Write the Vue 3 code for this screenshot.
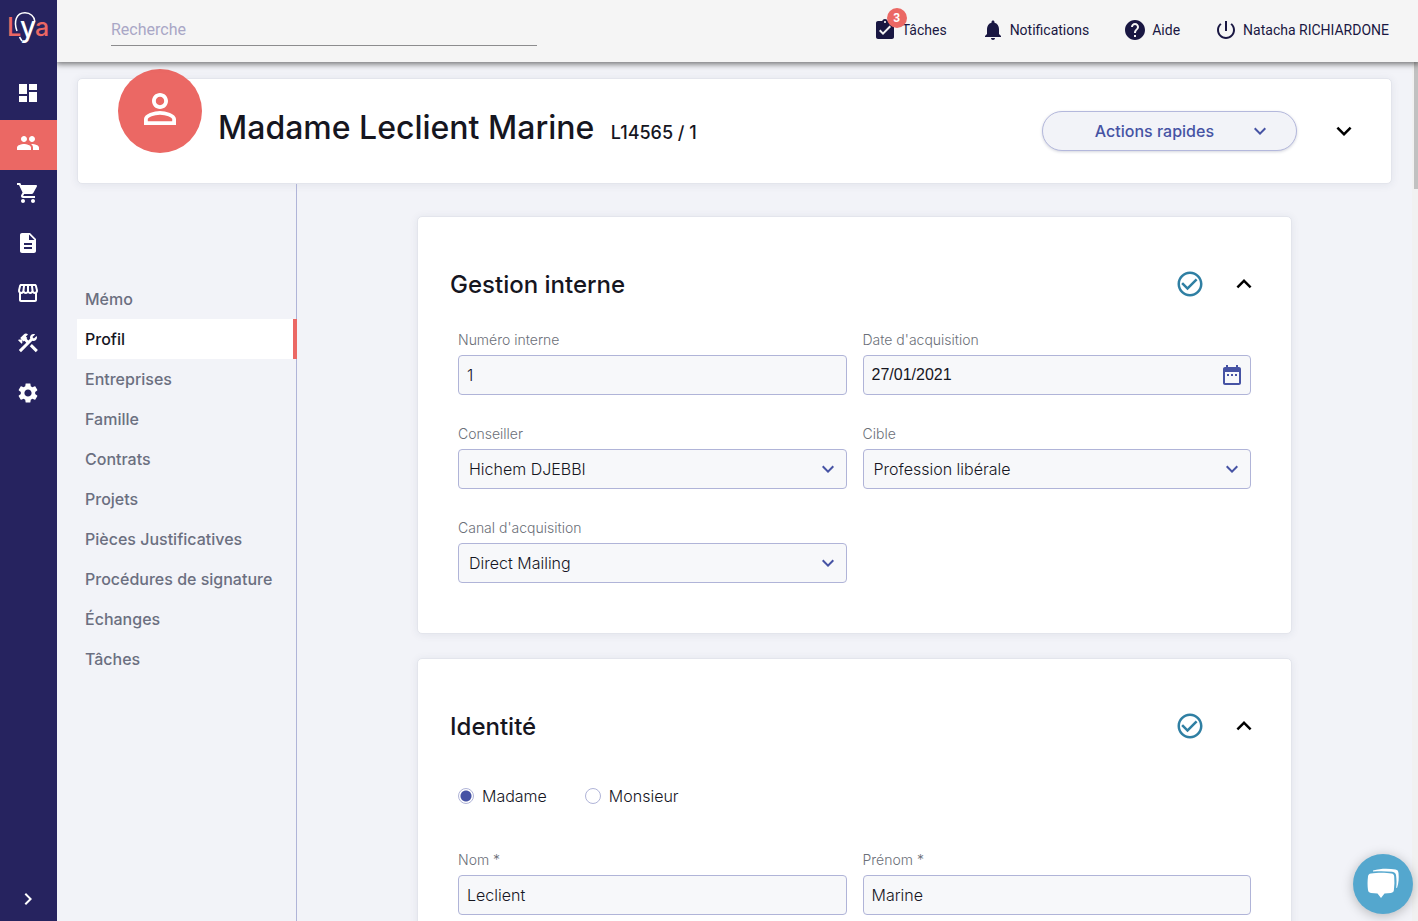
<script setup>
import { ref } from 'vue'

const icons = {
  dashboard: 'M3 13h8V3H3v10zm0 8h8v-6H3v6zm10 0h8V11h-8v10zm0-18v6h8V3h-8z',
  people: 'M16 11c1.66 0 2.99-1.34 2.99-3S17.66 5 16 5c-1.66 0-3 1.34-3 3s1.34 3 3 3zm-8 0c1.66 0 2.99-1.34 2.99-3S9.66 5 8 5C6.34 5 5 6.34 5 8s1.34 3 3 3zm0 2c-2.33 0-7 1.17-7 3.5V19h14v-2.5c0-2.33-4.67-3.5-7-3.5zm8 0c-.29 0-.62.02-.97.05 1.16.84 1.97 1.97 1.97 3.45V19h6v-2.5c0-2.33-4.67-3.5-7-3.5z',
  cart: 'M7 18c-1.1 0-1.99.9-1.99 2S5.9 22 7 22s2-.9 2-2-.9-2-2-2zM1 2v2h2l3.6 7.59-1.35 2.45c-.16.28-.25.61-.25.96 0 1.1.9 2 2 2h12v-2H7.42c-.14 0-.25-.11-.25-.25l.03-.12.9-1.63h7.45c.75 0 1.41-.41 1.75-1.03l3.58-6.49c.08-.14.12-.31.12-.48 0-.55-.45-1-1-1H5.21l-.94-2H1zm16 16c-1.1 0-1.99.9-1.99 2s.89 2 1.99 2 2-.9 2-2-.9-2-2-2z',
  document: 'M14 2H6c-1.1 0-1.99.9-1.99 2L4 20c0 1.1.89 2 1.99 2H18c1.1 0 2-.9 2-2V8l-6-6zm2 16H8v-2h8v2zm0-4H8v-2h8v2zm-3-5V3.5L18.5 9H13z',
  store: 'M21.9 8.89l-1.05-4.37c-.22-.9-1-1.52-1.91-1.52H5.05c-.9 0-1.69.63-1.9 1.52L2.1 8.89c-.24 1.02-.02 2.06.62 2.88.08.11.19.19.28.29V19c0 1.1.9 2 2 2h14c1.1 0 2-.9 2-2v-6.94c.09-.09.2-.18.28-.28.64-.82.87-1.87.62-2.89zm-2.99-3.9l1.05 4.37c.1.42.01.84-.25 1.17-.14.18-.44.47-.94.47-.61 0-1.14-.49-1.21-1.14L16.98 5l1.93-.01zM13 5h1.96l.54 4.52c.05.39-.07.78-.33 1.07-.22.26-.54.41-.95.41-.67 0-1.22-.59-1.22-1.31V5zM8.49 9.52L9.04 5H11v4.69c0 .72-.55 1.31-1.29 1.31-.34 0-.65-.15-.89-.41-.25-.29-.37-.68-.33-1.07zm-4.45-.16L5.05 5h1.97l-.58 4.86c-.08.65-.6 1.14-1.21 1.14-.49 0-.8-.29-.93-.47-.27-.32-.36-.75-.26-1.17zM5 19v-6.03c.08.01.15.03.23.03.87 0 1.66-.36 2.24-.95.6.6 1.4.95 2.31.95.87 0 1.65-.36 2.23-.93.59.57 1.39.93 2.29.93.84 0 1.64-.35 2.24-.95.58.59 1.37.95 2.24.95.08 0 .15-.02.23-.03V19H5z',
  tools: 'M13.78 15.17l2.12-2.12 6 6-2.12 2.12zM17.5 10c1.93 0 3.5-1.57 3.5-3.5 0-.58-.16-1.12-.41-1.6l-2.7 2.7L16.4 6.11l2.7-2.7C18.62 3.16 18.08 3 17.5 3 15.57 3 14 4.57 14 6.5c0 .41.08.8.21 1.16l-1.85 1.85-1.78-1.78.71-.71-1.41-1.41L12 3.49c-1.17-1.17-3.07-1.17-4.24 0L4.22 7.03l1.41 1.41H2.81l-.71.71 3.54 3.54.71-.71V9.15l1.41 1.41.71-.71 1.78 1.78-7.41 7.41 2.12 2.12L16.34 9.79c.36.13.75.21 1.16.21z',
  settings: 'M19.14 12.94c.04-.3.06-.61.06-.94 0-.32-.02-.64-.07-.94l2.03-1.58c.18-.14.23-.41.12-.61l-1.92-3.32c-.12-.22-.37-.29-.59-.22l-2.39.96c-.5-.38-1.03-.7-1.62-.94l-.36-2.54c-.04-.24-.24-.41-.48-.41h-3.84c-.24 0-.43.17-.47.41l-.36 2.54c-.59.24-1.13.57-1.62.94l-2.39-.96c-.22-.08-.47 0-.59.22L2.74 8.87c-.12.21-.08.47.12.61l2.03 1.58c-.05.3-.09.63-.09.94s.02.64.07.94l-2.03 1.58c-.18.14-.23.41-.12.61l1.92 3.32c.12.22.37.29.59.22l2.39-.96c.5.38 1.03.7 1.62.94l.36 2.54c.05.24.24.41.48.41h3.84c.24 0 .44-.17.47-.41l.36-2.54c.59-.24 1.13-.56 1.62-.94l2.39.96c.22.08.47 0 .59-.22l1.92-3.32c.12-.22.07-.47-.12-.61l-2.01-1.58zM12 15.6c-1.98 0-3.6-1.62-3.6-3.6s1.62-3.6 3.6-3.6 3.6 1.62 3.6 3.6-1.62 3.6-3.6 3.6z',
  task: 'M19 3h-4.18C14.4 1.84 13.3 1 12 1c-1.3 0-2.4.84-2.82 2H5c-1.1 0-2 .9-2 2v14c0 1.1.9 2 2 2h14c1.1 0 2-.9 2-2V5c0-1.1-.9-2-2-2zm-7 0c.55 0 1 .45 1 1s-.45 1-1 1-1-.45-1-1 .45-1 1-1zm-2 14l-4-4 1.41-1.41L10 14.17l6.59-6.59L18 9l-8 8z',
  bell: 'M12 22c1.1 0 2-.9 2-2h-4c0 1.1.89 2 2 2zm6-6v-5c0-3.07-1.64-5.64-4.5-6.32V4c0-.83-.67-1.5-1.5-1.5s-1.5.67-1.5 1.5v.68C7.63 5.36 6 7.92 6 11v5l-2 2v1h16v-1l-2-2z',
  help: 'M12 2C6.48 2 2 6.48 2 12s4.48 10 10 10 10-4.48 10-10S17.52 2 12 2zm1 17h-2v-2h2v2zm2.07-7.75l-.9.92C13.45 12.9 13 13.5 13 15h-2v-.5c0-1.1.45-2.1 1.17-2.83l1.24-1.26c.37-.36.59-.86.59-1.41 0-1.1-.9-2-2-2s-2 .9-2 2H8c0-2.21 1.79-4 4-4s4 1.79 4 4c0 .88-.36 1.68-.93 2.25z',
  power: 'M13 3h-2v10h2V3zm4.83 2.17l-1.42 1.42C17.99 7.86 19 9.81 19 12c0 3.87-3.13 7-7 7s-7-3.13-7-7c0-2.19 1.01-4.14 2.58-5.42L6.17 5.17C4.23 6.82 3 9.26 3 12c0 4.97 4.03 9 9 9s9-4.03 9-9c0-2.74-1.23-5.18-3.17-6.83z',
  person: 'M12 5.9c1.16 0 2.1.94 2.1 2.1s-.94 2.1-2.1 2.1S9.9 9.16 9.9 8s.94-2.1 2.1-2.1m0 9c2.97 0 6.1 1.46 6.1 2.1v1.1H5.9V17c0-.64 3.13-2.1 6.1-2.1M12 4C9.79 4 8 5.79 8 8s1.79 4 4 4 4-1.79 4-4-1.79-4-4-4zm0 9c-2.67 0-8 1.34-8 4v3h16v-3c0-2.66-5.33-4-8-4z',
  down: 'M7.41 8.59L12 13.17l4.59-4.58L18 10l-6 6-6-6 1.41-1.41z',
  up: 'M7.41 15.41L12 10.83l4.59 4.58L18 14l-6-6-6 6 1.41 1.41z',
  right: 'M8.59 16.59L13.17 12 8.59 7.41 10 6l6 6-6 6-1.41-1.41z',
  check: 'M16.59 7.58L10 14.17l-3.59-3.58L5 12l5 5 8-8-1.41-1.42zM12 2C6.48 2 2 6.48 2 12s4.48 10 10 10 10-4.48 10-10S17.52 2 12 2zm0 18c-4.42 0-8-3.58-8-8s3.58-8 8-8 8 3.58 8 8-3.58 8-8 8z',
  calendar: 'M9 11H7v2h2v-2zm4 0h-2v2h2v-2zm4 0h-2v2h2v-2zm2-7h-1V2h-2v2H8V2H6v2H5c-1.11 0-1.99.9-1.99 2L3 20c0 1.1.89 2 2 2h14c1.1 0 2-.9 2-2V6c0-1.1-.9-2-2-2zm0 16H5V9h14v11z',
}

const modules = [
  { icon: 'dashboard', label: 'Tableau de bord' },
  { icon: 'people', label: 'Clients' },
  { icon: 'cart', label: 'Ventes' },
  { icon: 'document', label: 'Documents' },
  { icon: 'store', label: 'Boutique' },
  { icon: 'tools', label: 'Outils' },
  { icon: 'settings', label: 'Paramètres' },
]
const topLinks = [
  { icon: 'task', label: 'Tâches', badge: 3 },
  { icon: 'bell', label: 'Notifications' },
  { icon: 'help', label: 'Aide' },
  { icon: 'power', label: 'Natacha RICHIARDONE' },
]
const sections = ['Mémo', 'Profil', 'Entreprises', 'Famille', 'Contrats', 'Projets', 'Pièces Justificatives', 'Procédures de signature', 'Échanges', 'Tâches']

const number = ref('1')
const acquired = ref('27/01/2021')
const civility = ref('madame')
const lastName = ref('Leclient')
const firstName = ref('Marine')
</script>

<template>
  <div class="app">
    <aside class="rail">
      <a href="#" class="logo" aria-label="Lya">
        <svg viewBox="0 0 57 57" width="57" height="57">
          <path d="M17 31C13.500 22 16 12.800 25 12.800c5.500 0 9.300 3.700 9.700 8.200M19.500 37l2.500 4" fill="none" stroke="#fff" stroke-width="1.500" />
          <text x="7" y="36" class="logo-red">L</text>
          <text x="20" y="37" class="logo-white">y</text>
          <text x="35" y="36" class="logo-red">a</text>
        </svg>
      </a>
      <nav class="modules">
        <a v-for="m in modules" :key="m.icon" href="#" :aria-label="m.label" :class="['module', { active: m.icon === 'people' }]">
          <svg viewBox="0 0 24 24" width="24" height="24"><path :d="icons[m.icon]" /></svg>
        </a>
      </nav>
      <button class="expand" aria-label="Déplier le menu">
        <svg viewBox="0 0 24 24" width="24" height="24"><path :d="icons.right" /></svg>
      </button>
    </aside>

    <div class="page">
      <header class="topbar">
        <input class="search" type="search" placeholder="Recherche" aria-label="Recherche" />
        <nav class="toplinks">
          <a v-for="l in topLinks" :key="l.label" href="#" class="toplink">
            <svg viewBox="0 0 24 24" width="24" height="24"><path :d="icons[l.icon]" /></svg>
            <span v-if="l.badge" class="badge">{{ l.badge }}</span>
            <span>{{ l.label }}</span>
          </a>
        </nav>
      </header>

      <div class="scroller">
        <main class="content">
          <section class="card client">
            <div class="avatar">
              <svg viewBox="0 0 24 24" width="48" height="48"><path :d="icons.person" /></svg>
            </div>
            <h1>Madame Leclient Marine <small>L14565 / 1</small></h1>
            <button class="quick">
              <span>Actions rapides</span>
              <svg viewBox="0 0 24 24" width="24" height="24"><path :d="icons.down" /></svg>
            </button>
            <button class="icon-btn" aria-label="Afficher le détail">
              <svg viewBox="0 0 24 24" width="30" height="30"><path :d="icons.down" /></svg>
            </button>
          </section>

          <div class="columns">
            <nav class="sections">
              <a v-for="s in sections" :key="s" href="#" :class="{ active: s === 'Profil' }">{{ s }}</a>
            </nav>

            <div class="forms">
              <section class="card form-card">
                <div class="card-head">
                  <h2>Gestion interne</h2>
                  <svg class="valid" viewBox="0 0 24 24" width="30" height="30"><path :d="icons.check" /></svg>
                  <button class="icon-btn" aria-label="Replier">
                    <svg viewBox="0 0 24 24" width="30" height="30"><path :d="icons.up" /></svg>
                  </button>
                </div>
                <div class="fields">
                  <div class="field">
                    <label for="numero">Numéro interne</label>
                    <input id="numero" v-model="number" type="text" />
                  </div>
                  <div class="field">
                    <label for="date">Date d'acquisition</label>
                    <div class="control">
                      <input id="date" v-model="acquired" class="date" type="text" />
                      <svg viewBox="0 0 24 24" width="24" height="24"><path :d="icons.calendar" /></svg>
                    </div>
                  </div>
                  <div class="field">
                    <label for="conseiller">Conseiller</label>
                    <div class="control">
                      <select id="conseiller"><option>Hichem DJEBBI</option></select>
                      <svg viewBox="0 0 24 24" width="24" height="24"><path :d="icons.down" /></svg>
                    </div>
                  </div>
                  <div class="field">
                    <label for="cible">Cible</label>
                    <div class="control">
                      <select id="cible"><option>Profession libérale</option></select>
                      <svg viewBox="0 0 24 24" width="24" height="24"><path :d="icons.down" /></svg>
                    </div>
                  </div>
                  <div class="field">
                    <label for="canal">Canal d'acquisition</label>
                    <div class="control">
                      <select id="canal"><option>Direct Mailing</option></select>
                      <svg viewBox="0 0 24 24" width="24" height="24"><path :d="icons.down" /></svg>
                    </div>
                  </div>
                </div>
              </section>

              <section class="card form-card">
                <div class="card-head">
                  <h2>Identité</h2>
                  <svg class="valid" viewBox="0 0 24 24" width="30" height="30"><path :d="icons.check" /></svg>
                  <button class="icon-btn" aria-label="Replier">
                    <svg viewBox="0 0 24 24" width="30" height="30"><path :d="icons.up" /></svg>
                  </button>
                </div>
                <div class="radios">
                  <label><input v-model="civility" type="radio" name="civility" value="madame" />Madame</label>
                  <label><input v-model="civility" type="radio" name="civility" value="monsieur" />Monsieur</label>
                </div>
                <div class="fields">
                  <div class="field">
                    <label for="nom">Nom *</label>
                    <input id="nom" v-model="lastName" type="text" />
                  </div>
                  <div class="field">
                    <label for="prenom">Prénom *</label>
                    <input id="prenom" v-model="firstName" type="text" />
                  </div>
                </div>
              </section>
            </div>
          </div>
        </main>
        <div class="track"><div class="thumb"></div></div>
      </div>
    </div>

    <button class="chat" aria-label="Ouvrir la discussion">
      <svg viewBox="0 0 32 32" width="32" height="32">
        <path d="M6 2.500C14 .2 22 .5 28.500 1.500c2 .3 2.800 1.500 3 3.500.5 5 .3 10-1.500 15l-.8-.2c.5-4 .4-8-.1-12-.3-2.500-1.300-3.700-4-4C19 3 12 3 6 3.500z" />
        <path d="M4 5.500c6-.9 15-.9 20.500 0 1.800.3 2.500 1.200 2.700 3 .4 4.500.3 9-.3 13.500-.2 1.800-1 2.600-3 2.900-2 .3-4.200.4-6.400.5L14 30l-3.500-4.600c-2.200-.1-4.400-.2-6.500-.5-2-.3-2.700-1.100-3-2.900-.6-4.500-.6-9 0-13.500.3-1.800 1-2.700 3-3z" />
      </svg>
    </button>
  </div>
</template>

<style>
body { margin: 0; }
</style>

<style scoped>
* { box-sizing: border-box; }
.app {
  display: flex;
  height: 100vh;
  overflow: hidden;
  background: #f2f3f8;
  color: #16161f;
  font-family: Inter, "Open Sans", sans-serif;
  font-size: 16px;
}
svg { display: block; flex: none; fill: currentColor; }
a { color: inherit; text-decoration: none; }
button { border: 0; padding: 0; background: none; color: inherit; font: inherit; }

.rail { display: flex; flex-direction: column; flex: none; width: 57px; background: #26235f; color: #fff; }
.logo { height: 70px; }
.logo text { font-family: Inter, sans-serif; font-weight: 500; }
.logo-red { fill: #eb6864; font-size: 25px; }
.logo-white { fill: #fff; font-size: 28px; }
.module { display: flex; justify-content: center; height: 50px; padding: 11px 2px 0 0; }
.module.active { background: #eb6864; }
.expand { display: flex; justify-content: center; margin-top: auto; padding: 0 2px 10px 0; }

.page { display: flex; flex: 1; flex-direction: column; min-width: 0; }
.topbar {
  position: relative;
  z-index: 2;
  display: flex;
  flex: none;
  align-items: center;
  justify-content: space-between;
  height: 62px;
  padding: 0 29px 2px 54px;
  background: #f5f5f5;
  box-shadow: 0 1px 6px 1px rgba(0, 0, 0, 0.55);
  clip-path: inset(0 0 -12px 0);
  font-family: Roboto, sans-serif;
}
.search {
  width: 426px;
  height: 32px;
  padding: 0;
  border: 0;
  border-bottom: 1px solid #8c8c8e;
  border-radius: 0;
  outline: 0;
  background: none;
  font: 400 16px Roboto, sans-serif;
}
.search::placeholder { color: #a9a7c6; }
.toplinks { display: flex; gap: 34px; color: #191742; font-size: 14px; line-height: 24px; }
.toplink { position: relative; display: flex; align-items: center; gap: 5px; }
.badge {
  position: absolute;
  top: -10px;
  left: 14px;
  width: 20px;
  height: 20px;
  border-radius: 50%;
  background: #eb6864;
  color: #fff;
  font-size: 12px;
  font-weight: 700;
  line-height: 20px;
  text-align: center;
}

.scroller { display: flex; flex: 1; min-height: 0; }
.content { flex: 1; min-width: 0; padding: 16px 20px 0; overflow: hidden; }
.track { flex: none; width: 6px; padding-left: 2px; background: #f1f1f1; }
.thumb { height: 127px; background: #c1c1c1; }

.card { border: 1px solid #e3e5ec; border-radius: 5px; background: #fff; box-shadow: 0 1px 8px rgba(40, 50, 90, 0.08); }
.client { display: flex; align-items: center; height: 106px; padding: 0 32px 0 40px; }
.avatar {
  display: flex;
  align-items: center;
  justify-content: center;
  align-self: flex-start;
  width: 84px;
  height: 84px;
  margin-top: -10px;
  padding-bottom: 4px;
  border-radius: 50%;
  background: #eb6864;
  color: #fff;
}
h1, h2 { flex: 1; margin: 0; font-weight: 500; }
h1 { padding: 0 0 2px 16px; font-size: 32px; line-height: 40px; }
h1 small { margin-left: 8px; font-size: 18px; }
.quick {
  display: flex;
  align-items: center;
  justify-content: flex-end;
  gap: 34px;
  width: 255px;
  height: 40px;
  padding-right: 24px;
  border: 1px solid #b4b8dc;
  border-radius: 20px;
  background: #f2f3f8;
  box-shadow: 0 1px 3px rgba(40, 50, 90, 0.2);
  color: #4653a4;
  font-weight: 500;
}
.icon-btn { color: #000; }
.quick + .icon-btn { margin-left: 32px; }

.columns { display: flex; align-items: stretch; min-height: 100%; }
.sections { flex: none; width: 220px; padding-top: 95px; border-right: 1px solid #b0b4d8; color: #6b6f80; font-weight: 500; }
.sections a { display: block; height: 40px; padding-left: 8px; line-height: 40px; }
.sections a.active { margin-right: -1px; border-right: 4px solid #eb6864; background: #fff; color: #16161f; }

.forms { display: flex; flex: 1; flex-direction: column; gap: 24px; padding: 32px 100px 0 120px; }
.form-card { padding: 47px 40px 50px; }
.card-head { display: flex; align-items: center; height: 40px; margin: 0 -8px 26px; }
h2 { padding-top: 2px; font-size: 24px; line-height: 30px; }
.valid { color: #2f7fa3; }
.card-head .icon-btn { margin: 0 0 0 24px; }
.fields { display: grid; grid-template-columns: 1fr 1fr; gap: 29px 16px; }
.field > label { display: block; margin-bottom: 5px; color: #6b6f78; font-size: 14px; font-weight: 300; line-height: 20px; }
.field input, .field select {
  display: block;
  width: 100%;
  height: 40px;
  padding: 0 8px;
  border: 1px solid #b0b4d8;
  border-radius: 4px;
  outline: 0;
  background: #f7f8fa;
  color: #16161f;
  font: 300 16px Inter, "Open Sans", sans-serif;
}
.field select { padding: 0 10px; appearance: none; }
.field .date { font: 400 16px "Liberation Sans", Arial, sans-serif; }
.control { position: relative; }
.control svg { position: absolute; top: 8px; right: 7px; color: #4653a4; pointer-events: none; }

.radios { display: flex; gap: 38px; margin: 40px 0 44px; font-weight: 300; line-height: 20px; }
.radios label { display: flex; align-items: center; gap: 8px; }
.radios input { width: 16px; height: 16px; margin: 0; border: 1px solid #b0b4d8; border-radius: 50%; background: #fff; appearance: none; }
.radios input:checked { background: radial-gradient(circle, #4653a4 5px, #fff 6px); }

.chat {
  position: fixed;
  right: 5px;
  bottom: 7px;
  display: flex;
  align-items: center;
  justify-content: center;
  width: 60px;
  height: 60px;
  border-radius: 50%;
  background: #54a7ce;
  box-shadow: 0 2px 12px rgba(0, 0, 0, 0.25);
  color: #fff;
}
</style>
